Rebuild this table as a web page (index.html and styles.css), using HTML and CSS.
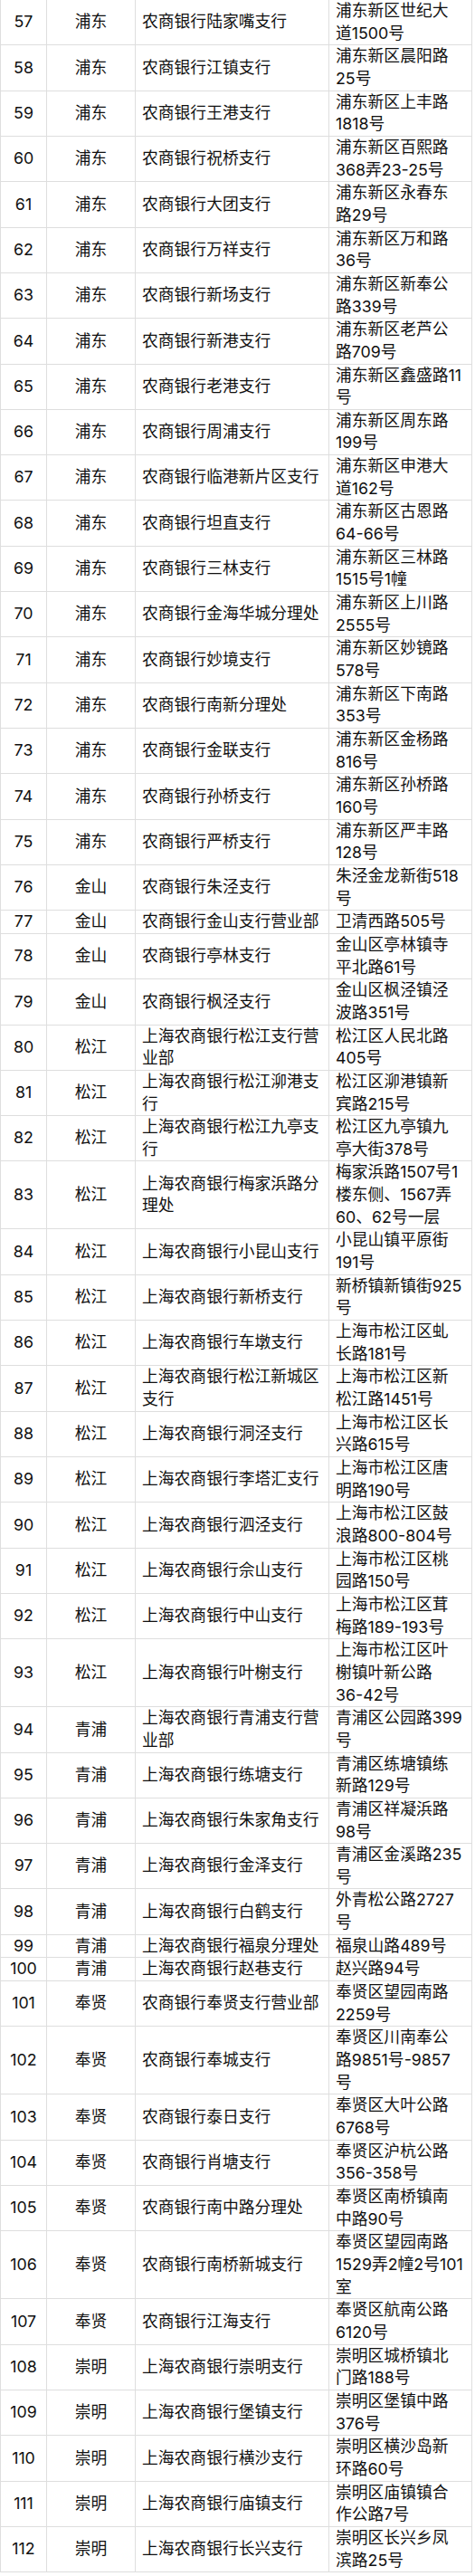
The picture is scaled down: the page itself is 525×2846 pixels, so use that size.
FILE: index.html
```html
<!DOCTYPE html>
<html lang="zh-CN">
<head>
<meta charset="utf-8">
<title>网点列表</title>
<link rel="stylesheet" href="styles.css">
</head>
<body>
<table class="branch-table">
<tbody>
<tr><td class="c-no">57</td><td class="c-area">浦东</td><td class="c-name">农商银行陆家嘴支行</td><td class="c-addr">浦东新区世纪大道1500号</td></tr>
<tr><td class="c-no">58</td><td class="c-area">浦东</td><td class="c-name">农商银行江镇支行</td><td class="c-addr">浦东新区晨阳路25号</td></tr>
<tr><td class="c-no">59</td><td class="c-area">浦东</td><td class="c-name">农商银行王港支行</td><td class="c-addr">浦东新区上丰路1818号</td></tr>
<tr><td class="c-no">60</td><td class="c-area">浦东</td><td class="c-name">农商银行祝桥支行</td><td class="c-addr">浦东新区百熙路368弄<span class="range">23-25</span>号</td></tr>
<tr><td class="c-no">61</td><td class="c-area">浦东</td><td class="c-name">农商银行大团支行</td><td class="c-addr">浦东新区永春东路29号</td></tr>
<tr><td class="c-no">62</td><td class="c-area">浦东</td><td class="c-name">农商银行万祥支行</td><td class="c-addr">浦东新区万和路36号</td></tr>
<tr><td class="c-no">63</td><td class="c-area">浦东</td><td class="c-name">农商银行新场支行</td><td class="c-addr">浦东新区新奉公路339号</td></tr>
<tr><td class="c-no">64</td><td class="c-area">浦东</td><td class="c-name">农商银行新港支行</td><td class="c-addr">浦东新区老芦公路709号</td></tr>
<tr><td class="c-no">65</td><td class="c-area">浦东</td><td class="c-name">农商银行老港支行</td><td class="c-addr">浦东新区鑫盛路11号</td></tr>
<tr><td class="c-no">66</td><td class="c-area">浦东</td><td class="c-name">农商银行周浦支行</td><td class="c-addr">浦东新区周东路199号</td></tr>
<tr><td class="c-no">67</td><td class="c-area">浦东</td><td class="c-name">农商银行临港新片区支行</td><td class="c-addr">浦东新区申港大道162号</td></tr>
<tr><td class="c-no">68</td><td class="c-area">浦东</td><td class="c-name">农商银行坦直支行</td><td class="c-addr">浦东新区古恩路<span class="range">64-66</span>号</td></tr>
<tr><td class="c-no">69</td><td class="c-area">浦东</td><td class="c-name">农商银行三林支行</td><td class="c-addr">浦东新区三林路1515号1幢</td></tr>
<tr><td class="c-no">70</td><td class="c-area">浦东</td><td class="c-name">农商银行金海华城分理处</td><td class="c-addr">浦东新区上川路2555号</td></tr>
<tr><td class="c-no">71</td><td class="c-area">浦东</td><td class="c-name">农商银行妙境支行</td><td class="c-addr">浦东新区妙镜路578号</td></tr>
<tr><td class="c-no">72</td><td class="c-area">浦东</td><td class="c-name">农商银行南新分理处</td><td class="c-addr">浦东新区下南路353号</td></tr>
<tr><td class="c-no">73</td><td class="c-area">浦东</td><td class="c-name">农商银行金联支行</td><td class="c-addr">浦东新区金杨路816号</td></tr>
<tr><td class="c-no">74</td><td class="c-area">浦东</td><td class="c-name">农商银行孙桥支行</td><td class="c-addr">浦东新区孙桥路160号</td></tr>
<tr><td class="c-no">75</td><td class="c-area">浦东</td><td class="c-name">农商银行严桥支行</td><td class="c-addr">浦东新区严丰路128号</td></tr>
<tr><td class="c-no">76</td><td class="c-area">金山</td><td class="c-name">农商银行朱泾支行</td><td class="c-addr">朱泾金龙新街518号</td></tr>
<tr><td class="c-no">77</td><td class="c-area">金山</td><td class="c-name">农商银行金山支行营业部</td><td class="c-addr">卫清西路505号</td></tr>
<tr><td class="c-no">78</td><td class="c-area">金山</td><td class="c-name">农商银行亭林支行</td><td class="c-addr">金山区亭林镇寺平北路61号</td></tr>
<tr><td class="c-no">79</td><td class="c-area">金山</td><td class="c-name">农商银行枫泾支行</td><td class="c-addr">金山区枫泾镇泾波路351号</td></tr>
<tr><td class="c-no">80</td><td class="c-area">松江</td><td class="c-name">上海农商银行松江支行营业部</td><td class="c-addr">松江区人民北路405号</td></tr>
<tr><td class="c-no">81</td><td class="c-area">松江</td><td class="c-name">上海农商银行松江泖港支行</td><td class="c-addr">松江区泖港镇新宾路215号</td></tr>
<tr><td class="c-no">82</td><td class="c-area">松江</td><td class="c-name">上海农商银行松江九亭支行</td><td class="c-addr">松江区九亭镇九亭大街378号</td></tr>
<tr><td class="c-no">83</td><td class="c-area">松江</td><td class="c-name">上海农商银行梅家浜路分理处</td><td class="c-addr">梅家浜路1507号1楼东侧、1567弄60、62号一层</td></tr>
<tr><td class="c-no">84</td><td class="c-area">松江</td><td class="c-name">上海农商银行小昆山支行</td><td class="c-addr">小昆山镇平原街191号</td></tr>
<tr><td class="c-no">85</td><td class="c-area">松江</td><td class="c-name">上海农商银行新桥支行</td><td class="c-addr">新桥镇新镇街925号</td></tr>
<tr><td class="c-no">86</td><td class="c-area">松江</td><td class="c-name">上海农商银行车墩支行</td><td class="c-addr">上海市松江区虬长路181号</td></tr>
<tr><td class="c-no">87</td><td class="c-area">松江</td><td class="c-name">上海农商银行松江新城区支行</td><td class="c-addr">上海市松江区新松江路1451号</td></tr>
<tr><td class="c-no">88</td><td class="c-area">松江</td><td class="c-name">上海农商银行洞泾支行</td><td class="c-addr">上海市松江区长兴路615号</td></tr>
<tr><td class="c-no">89</td><td class="c-area">松江</td><td class="c-name">上海农商银行李塔汇支行</td><td class="c-addr">上海市松江区唐明路190号</td></tr>
<tr><td class="c-no">90</td><td class="c-area">松江</td><td class="c-name">上海农商银行泗泾支行</td><td class="c-addr">上海市松江区鼓浪路<span class="range">800-804</span>号</td></tr>
<tr><td class="c-no">91</td><td class="c-area">松江</td><td class="c-name">上海农商银行佘山支行</td><td class="c-addr">上海市松江区桃园路150号</td></tr>
<tr><td class="c-no">92</td><td class="c-area">松江</td><td class="c-name">上海农商银行中山支行</td><td class="c-addr">上海市松江区茸梅路<span class="range">189-193</span>号</td></tr>
<tr><td class="c-no">93</td><td class="c-area">松江</td><td class="c-name">上海农商银行叶榭支行</td><td class="c-addr">上海市松江区叶榭镇叶新公路<span class="range">36-42</span>号</td></tr>
<tr><td class="c-no">94</td><td class="c-area">青浦</td><td class="c-name">上海农商银行青浦支行营业部</td><td class="c-addr">青浦区公园路399号</td></tr>
<tr><td class="c-no">95</td><td class="c-area">青浦</td><td class="c-name">上海农商银行练塘支行</td><td class="c-addr">青浦区练塘镇练新路129号</td></tr>
<tr><td class="c-no">96</td><td class="c-area">青浦</td><td class="c-name">上海农商银行朱家角支行</td><td class="c-addr">青浦区祥凝浜路98号</td></tr>
<tr><td class="c-no">97</td><td class="c-area">青浦</td><td class="c-name">上海农商银行金泽支行</td><td class="c-addr">青浦区金溪路235号</td></tr>
<tr><td class="c-no">98</td><td class="c-area">青浦</td><td class="c-name">上海农商银行白鹤支行</td><td class="c-addr">外青松公路2727号</td></tr>
<tr><td class="c-no">99</td><td class="c-area">青浦</td><td class="c-name">上海农商银行福泉分理处</td><td class="c-addr">福泉山路489号</td></tr>
<tr><td class="c-no">100</td><td class="c-area">青浦</td><td class="c-name">上海农商银行赵巷支行</td><td class="c-addr">赵兴路94号</td></tr>
<tr><td class="c-no">101</td><td class="c-area">奉贤</td><td class="c-name">农商银行奉贤支行营业部</td><td class="c-addr">奉贤区望园南路2259号</td></tr>
<tr><td class="c-no">102</td><td class="c-area">奉贤</td><td class="c-name">农商银行奉城支行</td><td class="c-addr">奉贤区川南奉公路9851号-9857号</td></tr>
<tr><td class="c-no">103</td><td class="c-area">奉贤</td><td class="c-name">农商银行泰日支行</td><td class="c-addr">奉贤区大叶公路6768号</td></tr>
<tr><td class="c-no">104</td><td class="c-area">奉贤</td><td class="c-name">农商银行肖塘支行</td><td class="c-addr">奉贤区沪杭公路<span class="range">356-358</span>号</td></tr>
<tr><td class="c-no">105</td><td class="c-area">奉贤</td><td class="c-name">农商银行南中路分理处</td><td class="c-addr">奉贤区南桥镇南中路90号</td></tr>
<tr><td class="c-no">106</td><td class="c-area">奉贤</td><td class="c-name">农商银行南桥新城支行</td><td class="c-addr">奉贤区望园南路1529弄2幢2号101室</td></tr>
<tr><td class="c-no">107</td><td class="c-area">奉贤</td><td class="c-name">农商银行江海支行</td><td class="c-addr">奉贤区航南公路6120号</td></tr>
<tr><td class="c-no">108</td><td class="c-area">崇明</td><td class="c-name">上海农商银行崇明支行</td><td class="c-addr">崇明区城桥镇北门路188号</td></tr>
<tr><td class="c-no">109</td><td class="c-area">崇明</td><td class="c-name">上海农商银行堡镇支行</td><td class="c-addr">崇明区堡镇中路376号</td></tr>
<tr><td class="c-no">110</td><td class="c-area">崇明</td><td class="c-name">上海农商银行横沙支行</td><td class="c-addr">崇明区横沙岛新环路60号</td></tr>
<tr><td class="c-no">111</td><td class="c-area">崇明</td><td class="c-name">上海农商银行庙镇支行</td><td class="c-addr">崇明区庙镇镇合作公路7号</td></tr>
<tr><td class="c-no">112</td><td class="c-area">崇明</td><td class="c-name">上海农商银行长兴支行</td><td class="c-addr">崇明区长兴乡凤滨路25号</td></tr>
</tbody>
</table>
</body>
</html>
```
FILE: styles.css
```css
html, body {
  margin: 0;
  padding: 0;
  background: #ffffff;
}

body {
  font-family: "Inter", "Noto Sans CJK SC", "Liberation Sans", sans-serif;
  font-size: 17.8px;
  line-height: 24.65px;
  color: #111111;
}

.branch-table {
  border-collapse: separate;
  border-spacing: 0;
  table-layout: fixed;
  width: 522px;
}

.branch-table td {
  box-sizing: border-box;
  padding: 0;
  vertical-align: middle;
  border-right: 1px solid #dedede;
  border-bottom: 1px solid #dedede;
}

.branch-table .c-no {
  width: 52px;
  border-left: 1px solid #dedede;
  text-align: center;
}

.branch-table .c-area {
  width: 98px;
  text-align: center;
}

.branch-table .c-name {
  width: 214px;
  padding: 0 7px 0 7px;
  text-align: left;
}

.branch-table .c-addr {
  width: 158px;
  padding: 0 9px 0 7px;
  text-align: left;
}

.range {
  white-space: nowrap;
}
```
